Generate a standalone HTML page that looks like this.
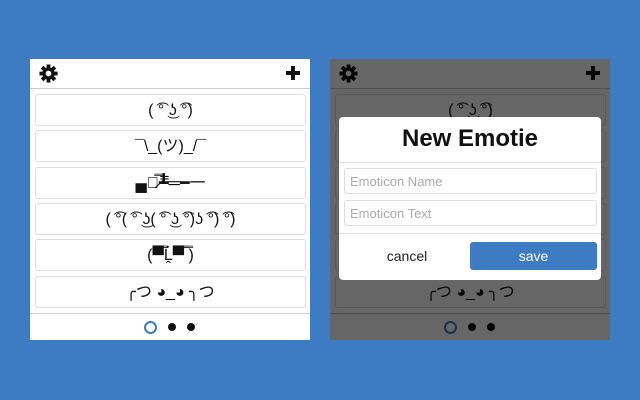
<!DOCTYPE html>
<html><head><meta charset="utf-8"><style>
body{margin:0;width:640px;height:400px;background:#3d7bc2;position:relative;overflow:hidden;font-family:"Liberation Sans","DejaVu Sans","Noto Sans CJK JP",sans-serif}
.p{position:absolute;top:59px;width:280px;height:281px;background:#fff}
.hd{position:absolute;left:0;top:0;width:280px;height:29px;border-bottom:1px solid #ccc}
.row{position:absolute;left:5px;width:269px;height:30px;border:1px solid #ddd;border-radius:3px;text-align:center;line-height:32px;font-size:16px;color:#111;white-space:nowrap;overflow:hidden}
.ft{position:absolute;left:0;top:254px;width:280px;height:1px;background:#ccc}
.plus{position:absolute;right:10px;top:7px;width:14px;height:14px}
.plus:before{content:"";position:absolute;left:5px;top:0;width:4px;height:14px;background:#111}
.plus:after{content:"";position:absolute;left:0;top:5px;width:14px;height:4px;background:#111}
.dot{position:absolute;border-radius:50%}
.ov{position:absolute;left:0;top:0;width:280px;height:281px;background:rgba(0,0,0,.6)}
.m{position:absolute;left:339px;top:117px;width:262px;height:163px;background:#fff;border-radius:4px}
.in{position:absolute;left:5px;height:26px;border:1px solid #ddd;border-radius:3px;color:#aaa;font-size:13px;line-height:25px;padding-left:5px;box-sizing:border-box;width:253px}
</style></head><body>
<div class="p" style="left:30px">
<div class="hd">
<svg style="position:absolute;left:9px;top:5px" width="19" height="19" viewBox="0 0 20 20"><g fill="#111"><circle cx="10" cy="10" r="6.5"/><rect x="8" y="0.5" width="4" height="19"/><rect x="8" y="0.5" width="4" height="19" transform="rotate(45 10 10)"/><rect x="8" y="0.5" width="4" height="19" transform="rotate(90 10 10)"/><rect x="8" y="0.5" width="4" height="19" transform="rotate(135 10 10)"/></g><circle cx="10" cy="10" r="3" fill="#fff"/></svg>
<div class="plus"></div></div>
<div class="row" style="top:35px">( ͡° ͜ʖ ͡°)</div>
<div class="row" style="top:71px">¯\_(ツ)_/¯</div>
<div class="row" style="top:108px">▄︻̷̿┻̿═━一</div>
<div class="row" style="top:144px">( ͡°( ͡° ͜ʖ( ͡° ͜ʖ ͡°)ʖ ͡°) ͡°)</div>
<div class="row" style="top:180px">(▀̿Ĺ̯▀̿ ̿)</div>
<div class="row" style="top:217px">╭つ ◕_◕ ╮つ</div>
<div class="ft"></div>
<div class="dot" style="left:114px;top:262px;width:9px;height:9px;border:2px solid #3d7bc2"></div>
<div class="dot" style="left:138px;top:264px;width:8px;height:8px;background:#111"></div>
<div class="dot" style="left:157px;top:264px;width:8px;height:8px;background:#111"></div>
</div>
<div class="p" style="left:330px">
<div class="hd">
<svg style="position:absolute;left:9px;top:5px" width="19" height="19" viewBox="0 0 20 20"><g fill="#111"><circle cx="10" cy="10" r="6.5"/><rect x="8" y="0.5" width="4" height="19"/><rect x="8" y="0.5" width="4" height="19" transform="rotate(45 10 10)"/><rect x="8" y="0.5" width="4" height="19" transform="rotate(90 10 10)"/><rect x="8" y="0.5" width="4" height="19" transform="rotate(135 10 10)"/></g><circle cx="10" cy="10" r="3" fill="#fff"/></svg>
<div class="plus"></div></div>
<div class="row" style="top:35px">( ͡° ͜ʖ ͡°)</div>
<div class="row" style="top:71px">¯\_(ツ)_/¯</div>
<div class="row" style="top:108px">▄︻̷̿┻̿═━一</div>
<div class="row" style="top:144px">( ͡°( ͡° ͜ʖ( ͡° ͜ʖ ͡°)ʖ ͡°) ͡°)</div>
<div class="row" style="top:180px">(▀̿Ĺ̯▀̿ ̿)</div>
<div class="row" style="top:217px">╭つ ◕_◕ ╮つ</div>
<div class="ft"></div>
<div class="dot" style="left:114px;top:262px;width:9px;height:9px;border:2px solid #3d7bc2"></div>
<div class="dot" style="left:138px;top:264px;width:8px;height:8px;background:#111"></div>
<div class="dot" style="left:157px;top:264px;width:8px;height:8px;background:#111"></div>
<div class="ov"></div>
</div>
<div class="m">
<div style="position:absolute;left:0;top:8px;width:262px;text-align:center;font-size:24px;font-weight:bold;color:#111">New Emotie</div>
<div style="position:absolute;left:0;top:45px;width:262px;height:1px;background:#ddd"></div>
<div class="in" style="top:51px">Emoticon Name</div>
<div class="in" style="top:83px">Emoticon Text</div>
<div style="position:absolute;left:0;top:116px;width:262px;height:1px;background:#ddd"></div>
<div style="position:absolute;left:0;top:125px;width:136px;height:28px;line-height:28px;text-align:center;font-size:14px;color:#222">cancel</div>
<div style="position:absolute;left:131px;top:125px;width:127px;height:28px;line-height:28px;text-align:center;font-size:14px;color:#fff;background:#3d7bc2;border-radius:3px">save</div>
</div>
</body></html>
